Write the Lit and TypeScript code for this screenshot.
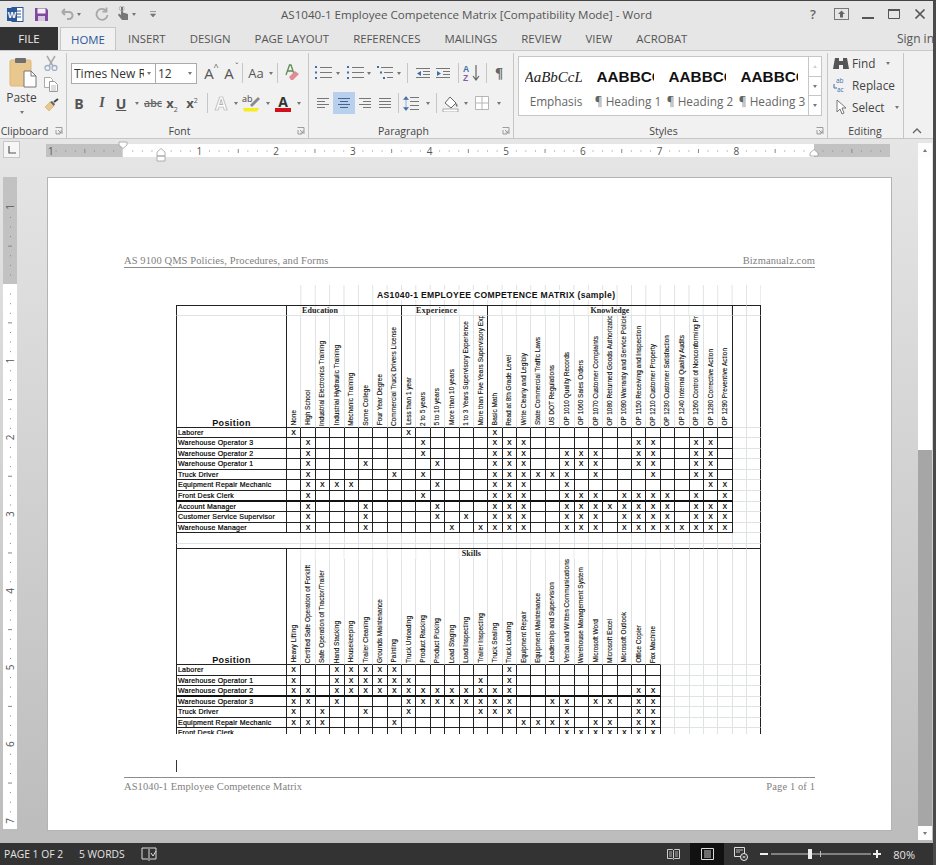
import { LitElement, html, css, svg } from 'lit'
import { customElement } from 'lit/decorators.js'

const EDU = ['None', 'High School', 'Industrial Electronics Training', 'Industrial Hydraulic Training', 'Mechanic Training', 'Some College', 'Four Year Degree', 'Commercial Truck Drivers License']
const EXP = ['Less than 1 year', '2 to 5 years', '5 to 10 years', 'More than 10 years', '1 to 3 Years Supervisory Experience', 'More than Five Years Supervisory Exp']
const KNOW = ['Basic Math', 'Read at 8th Grade Level', 'Write Clearly and Legibly', 'State Commercial Traffic Laws', 'US DOT Regulations', 'OP 1010 Quality Records', 'OP 1060 Sales Orders', 'OP 1070 Customer Complaints', 'OP 1080 Returned Goods Authorizatio', 'OP 1090 Warranty and Service Policie', 'OP 1150 Receiving and Inspection', 'OP 1210 Customer Property', 'OP 1230 Customer Satisfaction', 'OP 1240 Internal Quality Audits', 'OP 1260 Control of Nonconforming Pr', 'OP 1280 Corrective Action', 'OP 1290 Preventive Action']
const SKILLS = ['Heavy Lifting', 'Certified Safe Operation of Forklift', 'Safe Operation of Tractor/Trailer', 'Hand Stacking', 'Housekeeping', 'Trailer Cleaning', 'Grounds Maintenance', 'Painting', 'Truck Unloading', 'Product Racking', 'Product Picking', 'Load Staging', 'Load Inspecting', 'Trailer Inspecting', 'Truck Sealing', 'Truck Loading', 'Equipment Repair', 'Equipment Maintenance', 'Leadership and Supervision', 'Verbal and Written Communications', 'Warehouse Management System', 'Microsoft Word', 'Microsoft Excel', 'Microsoft Outlook', 'Office Copier', 'Fax Machine']

type Row = [string, number[], boolean?]

const ROWS1: Row[] = [
  ['Laborer', [0, 8, 14]],
  ['Warehouse Operator 3', [1, 9, 14, 15, 16, 24, 25, 28, 29]],
  ['Warehouse Operator 2', [1, 9, 14, 15, 16, 19, 20, 21, 24, 25, 28, 29]],
  ['Warehouse Operator 1', [1, 5, 10, 14, 15, 16, 19, 20, 21, 24, 25, 28, 29]],
  ['Truck Driver', [1, 7, 9, 14, 15, 16, 17, 18, 19, 21, 25, 28, 29]],
  ['Equipment Repair Mechanic', [1, 2, 3, 4, 10, 14, 15, 16, 19, 29, 30]],
  ['Front Desk Clerk', [1, 9, 14, 15, 16, 19, 20, 21, 23, 24, 25, 26, 28, 30], true],
  ['Account Manager', [1, 5, 10, 14, 15, 16, 19, 20, 21, 22, 23, 24, 25, 26, 28, 29, 30]],
  ['Customer Service Supervisor', [1, 5, 10, 12, 14, 15, 16, 19, 20, 21, 23, 24, 25, 26, 28, 29, 30]],
  ['Warehouse Manager', [1, 5, 11, 13, 14, 15, 16, 19, 20, 21, 23, 24, 25, 26, 27, 28, 29, 30]],
]

const ROWS2: Row[] = [
  ['Laborer', [0, 3, 4, 5, 6, 7, 15]],
  ['Warehouse Operator 1', [0, 3, 4, 5, 6, 7, 8, 13, 15]],
  ['Warehouse Operator 2', [0, 1, 3, 4, 5, 6, 7, 8, 9, 10, 11, 12, 13, 14, 15, 24, 25], true],
  ['Warehouse Operator 3', [0, 1, 3, 8, 9, 10, 11, 12, 13, 14, 15, 18, 19, 21, 22, 24, 25]],
  ['Truck Driver', [0, 2, 5, 8, 13, 14, 15, 19, 24, 25]],
  ['Equipment Repair Mechanic', [0, 1, 2, 7, 16, 17, 18, 19, 21, 22, 24, 25]],
  ['Front Desk Clerk', [19, 20, 21, 22, 23, 24, 25]],
]

const GRID_COLS = 33
const INCH = 76.7

const caret = html`<i class="caret"></i>`
const launcher = html`<svg class="launcher" width="8" height="8" viewBox="0 0 8 8"><path d="M.5 .5h6.5v6.5M1 3v4h4M3 3l3 3M6 3.5V6H3.5" fill="none" stroke="#888" stroke-width=".8"/></svg>`

function lines(rows: [number, number, number][], color = '#777') {
  return rows.map(([x, y, w]) => svg`<rect x=${x} y=${y} width=${w} height="1" fill=${color}></rect>`)
}

@customElement('app-root')
export class AppRoot extends LitElement {
  static styles = css`
    :host {
      display: block;
      width: 936px;
      height: 865px;
      overflow: hidden;
      font-family: 'Open Sans', 'Noto Sans', sans-serif;
      color: #444;
    }
    .frame {
      box-sizing: border-box;
      width: 936px;
      height: 865px;
      display: flex;
      flex-direction: column;
      border-right: 3px solid #4a4a4a;
      border-top: 1px solid #444;
      background: #e6e6e6;
    }

    /* title bar */
    .titlebar {
      height: 26px;
      flex: none;
      display: grid;
      grid-template-columns: 1fr auto 1fr;
      align-items: center;
      font-size: 11.6px;
      color: #555;
    }
    .qat, .winctl { display: flex; align-items: center; }
    .qat { padding-left: 7px; }
    .qat .save { margin-left: 10px; }
    .qat .undo { margin-left: 11px; }
    .qat .qcaret { margin-left: 3px; }
    .qat .redo { margin-left: 14px; }
    .qat .touch { margin-left: 8px; }
    .qat .custom { margin-left: 14px; }
    .winctl { justify-content: flex-end; gap: 12px; padding-right: 6px; }
    .winctl .help { font-size: 13px; font-weight: 600; color: #666; margin-right: 6px; }

    /* tabs */
    .tabs {
      height: 23px;
      flex: none;
      display: flex;
      align-items: stretch;
      font-size: 11.4px;
      color: #555;
    }
    .tab { display: flex; align-items: center; padding: 0 12px; white-space: nowrap; }
    .tab.file { width: 58px; box-sizing: border-box; justify-content: center; background: #333; color: #eee; padding: 0; margin-right: 2px; }
    .tab.home { width: 56px; box-sizing: border-box; justify-content: center; padding: 0; color: #2b579a; background: #f1f1f1; border: 1px solid #c6c6c6; border-bottom: none; }
    .signin { margin-left: auto; display: flex; align-items: center; font-size: 12px; width: 36px; overflow: hidden; white-space: nowrap; flex: none; }

    /* ribbon */
    .ribbon {
      height: 89px;
      flex: none;
      box-sizing: border-box;
      display: flex;
      background: #f1f1f1;
      border-top: 1px solid #c9c9c9;
      border-bottom: 1px solid #c6c6c6;
    }
    .group {
      box-sizing: border-box;
      display: flex;
      flex-direction: column;
      flex: none;
      margin: 2px 0 0;
      border-right: 1px solid #c6c6c6;
      position: relative;
    }
    .gbody { flex: 1; min-height: 0; }
    .glabel {
      height: 15px;
      font-size: 10.5px;
      line-height: 17px;
      text-align: center;
      color: #444;
      flex: none;
    }
    .launcher { position: absolute; right: 3px; bottom: 3px; }
    .g-clip { width: 67px; }
    .g-clip .glabel { padding-right: 17px; }
    .g-font { width: 242px; padding-left: 4px; }
    .g-font .glabel { padding-right: 20px; }
    .g-para { width: 205px; padding-left: 4px; }
    .g-para .glabel { padding-right: 19px; }
    .g-style { width: 314px; padding-left: 4px; }
    .g-style .glabel { padding-right: 18px; }
    .g-edit { width: 76px; padding-left: 5px; }
    .g-edit .glabel { padding-right: 6px; }
    .collapse { flex: 1; display: flex; align-items: flex-end; justify-content: center; padding-bottom: 4px; padding-right: 4px; }

    .clip { display: flex; height: 100%; }
    .paste { width: 43px; display: flex; flex-direction: column; align-items: center; padding-top: 4px; font-size: 12px; box-sizing: border-box; }
    .paste svg { display: block; margin-left: 3px; }
    .paste span { line-height: 16px; margin-top: 2px; }
    .paste .caret { margin-top: 5px; }
    .minis { width: 18px; margin-left: -1px; display: flex; flex-direction: column; align-items: center; gap: 6px; padding-top: 2px; }

    .row { display: flex; align-items: center; height: 22px; }
    .font-r1 { margin-top: 9px; }
    .font-r2 { margin-top: 8px; }
    .combo {
      box-sizing: border-box;
      height: 21px;
      background: #fff;
      border: 1px solid #ababab;
      display: flex;
      align-items: center;
      font-size: 12px;
      color: #333;
      padding-left: 2px;
      overflow: hidden;
      white-space: nowrap;
    }
    .combo span { flex: 1; overflow: hidden; }
    .combo .caret { margin: 0 4px 0 3px; }
    .c-font { width: 85px; }
    .c-size { width: 41px; border-left: none; }
    .ib { display: inline-flex; align-items: center; justify-content: center; height: 22px; flex: none; }
    .w8 { width: 8px; } .w10 { width: 10px; } .w16 { width: 16px; } .w18 { width: 18px; } .w20 { width: 20px; } .w22 { width: 22px; } .w30 { width: 30px; }
    .ml1 { margin-left: 1px; } .ml2 { margin-left: 2px; } .ml3 { margin-left: 3px; } .ml4 { margin-left: 4px; } .ml7 { margin-left: 7px; }
    .sep { width: 1px; height: 20px; background: #c6c6c6; flex: none; }
    .bigA { font-size: 15px; color: #555; position: relative; }
    .bigA small { font-size: 9px; position: absolute; top: -3px; right: -5px; }
    .aa { font-size: 13px; color: #555; }
    .fx { font-size: 14px; font-weight: 700; color: #555; }
    .fx.b { font-family: 'Open Sans', sans-serif; }
    .fx.i { font-family: 'Liberation Serif', serif; font-style: italic; }
    .fx.u { text-decoration: underline; }
    .abc { font-size: 10.5px; font-weight: 600; color: #666; text-decoration: line-through; }
    .xs { font-size: 13px; font-weight: 700; color: #555; line-height: 16px; }
    .xs sub, .xs sup { font-size: 7px; font-weight: 400; line-height: 0; }
    .outlineA { font-size: 17px; font-weight: 700; color: #fff; -webkit-text-stroke: .7px #aaa; }
    .colorA { display: flex; flex-direction: column; align-items: center; font-size: 14px; font-weight: 700; color: #333; line-height: 13px; }
    .colorA i { display: block; width: 16px; height: 4px; background: #d2101c; }
    .hl { background: #b8cfed; height: 22px; }
    .para-r1 { margin-top: 9px; }
    .para-r2 { margin-top: 8px; }
    .pil { font-size: 15px; color: #666; font-family: 'Liberation Serif', serif; font-weight: 700; }

    .gallery {
      box-sizing: border-box;
      width: 304px;
      height: 60px;
      margin-top: 3px;
      background: #fff;
      border: 1px solid #c6c6c6;
      display: flex;
    }
    .style-item { width: 72px; flex: none; display: flex; flex-direction: column; align-items: center; box-sizing: border-box; }
    .style-item:first-child { margin-left: 1px; }
    .sample { height: 26px; margin: 7px 0 0 -6px; width: 57px; overflow: hidden; white-space: nowrap; font: 700 15.300px/26px 'Liberation Sans', sans-serif; color: #111; }
    .sample.em { font: italic 400 15px/26px 'Liberation Serif', serif; color: #222; }
    .sname { font-size: 11.8px; color: #666; white-space: nowrap; line-height: 18px; margin-top: 2px; }
    .scroll { margin-left: auto; width: 14px; display: flex; flex-direction: column; border-left: 1px solid #c6c6c6; }
    .scroll div { flex: 1; display: flex; align-items: center; justify-content: center; border-bottom: 1px solid #c6c6c6; }
    .scroll div:last-child { border-bottom: none; }
    .scroll .dim { opacity: .35; }

    .edit { display: flex; flex-direction: column; gap: 0; font-size: 11.8px; color: #444; margin-top: -1px; }
    .edit div { display: flex; align-items: center; height: 22px; gap: 3px; white-space: nowrap; }
    .edit .caret { margin-left: 7px; }

    /* workspace */
    .workspace {
      flex: 1;
      min-height: 0;
      display: flex;
      background: linear-gradient(#e6e6e6, #bcbcbc);
    }
    .mainc { width: 918px; flex: none; display: flex; flex-direction: column; }
    .ruler-row { height: 21px; flex: none; position: relative; display: flex; align-items: flex-start; }
    .tabstop {
      box-sizing: border-box;
      width: 17px;
      height: 17px;
      margin: 2px 0 0 3px;
      background: #f6f6f6;
      border: 1px solid #c6c6c6;
      display: flex;
      align-items: center;
      justify-content: center;
    }
    .hruler { margin: 5px 0 0 26px; overflow: visible; display: block; }
    .ruler-text { font: 10px 'Open Sans', sans-serif; fill: #555; }
    .docbody { flex: 1; min-height: 0; display: flex; align-items: flex-start; padding-top: 17px; }
    .vruler { margin: 0 31px 0 3px; flex: none; display: block; }

    .page {
      box-sizing: border-box;
      width: 843px;
      height: 652px;
      margin-top: 1px;
      flex: none;
      background: #fff;
      box-shadow: 0 0 0 1px #b4b4b4;
      padding: 76px 76px 0;
      display: flex;
      flex-direction: column;
      font-family: 'Liberation Serif', serif;
      color: #7f7f7f;
      font-size: 10.5px;
    }
    .phead, .pfoot { display: flex; justify-content: space-between; flex: none; height: 13px; line-height: 13px; letter-spacing: .1px; }
    .phead { border-bottom: 1px solid #8c8c8c; }
    .pfoot { border-top: 1px solid #8c8c8c; box-sizing: content-box; padding-top: 2px; }
    .cursor { width: 1px; height: 12px; background: #333; margin: 26px 0 5px 52px; flex: none; }

    .sheet { margin: 17px 0 0 52px; width: 586px; height: 449px; overflow: hidden; flex: none; }
    .matrix {
      display: grid;
      grid-template-columns: 111px repeat(33, 14.39px);
      grid-template-rows: 20px 11px 111.500px repeat(10, 10.6px) 10.6px 3.900px 11px 106px repeat(7, 10.6px);
      font-family: 'Liberation Sans', sans-serif;
      color: #111;
    }
    .matrix > div { box-sizing: border-box; min-width: 0; min-height: 0; overflow: hidden; }
    .ruled {
      background:
        linear-gradient(#fff, #fff) 0 0 / 111px 100% no-repeat,
        linear-gradient(to right, #dfe3e3 1px, transparent 1px) 110px 0 / 14.39px 100%;
    }
    .sheet-title {
      grid-column: 1 / -1;
      font: 700 8.600px/20px 'Liberation Sans', sans-serif;
      letter-spacing: .32px;
      padding-left: 201px;
      white-space: nowrap;
    }
    .sheet-title span { background: #fff; }
    .b-r { border-right: 1px solid #dfe3e3; }
    .b-b { border-bottom: 1px solid #dfe3e3; }
    .d-r { border-right: 1px solid #222; }
    .d-b { border-bottom: 1px solid #222; }
    .d-bb { border-bottom: 2px solid #111; }
    .d-t { border-top: 1px solid #222; }
    .d-l { border-left: 1px solid #222; }
    .s6 { grid-column: span 6; }
    .s8 { grid-column: span 8; }
    .s17 { grid-column: span 17; }
    .s26 { grid-column: span 26; }
    .band {
      font: 700 8px/10px 'Liberation Serif', serif;
      letter-spacing: .1px;
      text-align: center;
      color: #222;
      white-space: nowrap;
      background: linear-gradient(to right, #e6e9e9 1px, transparent 1px) -1px 0 / 14.39px 100%;
    }
    .band.edu { padding-right: 48px; }
    .band.exp { padding-right: 16px; letter-spacing: .3px; }
    .band.skills { padding-right: 5px; line-height: 9px; }
    .pos {
      display: flex;
      align-items: flex-end;
      justify-content: center;
      font: 700 9px/8px 'Liberation Sans', sans-serif;
      letter-spacing: .4px;
    }
    .pos span { display: block; height: 8px; }
    .vh { display: flex; align-items: flex-end; justify-content: center; }
    .vh span {
      writing-mode: vertical-rl;
      transform: rotate(180deg);
      white-space: nowrap;
      font-size: 6.500px;
      line-height: 10px;
      padding-top: 1px;
      flex: none;
      -webkit-text-stroke: .12px #111;
    }
    .lab { font-size: 7px; line-height: 9.6px; letter-spacing: .22px; white-space: nowrap; padding-left: 1px; color: #000; -webkit-text-stroke: .2px #000; }
    .x { font-size: 7px; font-weight: 700; line-height: 9.6px; text-align: center; }

    /* scrollbar */
    .vscroll { width: 14px; margin: 4px 0 3px; display: flex; flex-direction: column; flex: none; }
    .sb-btn { height: 14px; background: #fdfdfd; display: flex; align-items: center; justify-content: center; flex: none; }
    .sb-track { height: 293px; background: #fff; flex: none; }
    .sb-thumb { flex: 1; background: #a6a6a6; }

    /* status bar */
    .status {
      height: 22px;
      flex: none;
      display: flex;
      align-items: center;
      background: #333;
      color: #e4e4e4;
      font-size: 10.3px;
      padding-left: 4px;
    }
    .status .words { margin-left: 16px; }
    .status .proof { margin-left: 16px; display: block; }
    .status .right { margin-left: auto; display: flex; align-items: center; height: 100%; margin-right: 18px; }
    .view { display: flex; align-items: center; justify-content: center; height: 100%; width: 33px; }
    .view.on { background: #111; width: 34px; }
    .zoombar { display: block; margin-left: 3px; }
    .pct { margin-left: 11px; font-size: 11px; }

    .caret { display: inline-block; width: 0; height: 0; border-left: 2.5px solid transparent; border-right: 2.5px solid transparent; border-top: 3px solid #777; flex: none; }
    .caret.up { border-top: none; border-bottom: 3px solid #777; }
    svg { flex: none; }
  `

  private renderMatrix() {
    const last = GRID_COLS - 1
    const blankCells = (from: number, cls: string) => {
      const out = []
      for (let i = from; i <= last; i++) out.push(html`<div class="${cls} ${i === last ? 'd-r' : 'b-r'}"></div>`)
      return out
    }
    const head = (labels: string[], ends: number[]) => labels.map((t, i) => html`
      <div class="vh d-b ${ends.includes(i) ? 'd-r' : 'b-r'}"><span>${t}</span></div>`)
    const dataRows = (rows: Row[], n: number) => rows.map(([name, xs, heavy]) => {
      const bot = heavy ? 'd-bb' : 'd-b'
      const cells = []
      for (let i = 0; i <= last; i++) {
        if (i < n) cells.push(html`<div class="x d-r ${bot}">${xs.includes(i) ? 'X' : ''}</div>`)
        else cells.push(html`<div class="b-b ${i === last ? 'd-r' : 'b-r'}"></div>`)
      }
      return html`<div class="lab d-l d-r ${bot}">${name}</div>${cells}`
    })

    return html`
      <div class="matrix">
        <div class="sheet-title ruled"><span>AS1040-1 EMPLOYEE COMPETENCE MATRIX (sample)</span></div>

        <div class="d-l d-r d-t b-b"></div>
        <div class="band edu s8 d-r d-t b-b">Education</div>
        <div class="band exp s6 d-r d-t b-b">Experience</div>
        <div class="band s17 d-r d-t b-b">Knowledge</div>
        <div class="d-t b-b b-r"></div>
        <div class="d-t b-b d-r"></div>

        <div class="pos d-l d-r d-b">Position</div>
        ${head([...EDU, ...EXP, ...KNOW], [7, 13, 30])}
        <div class="b-b b-r"></div>
        <div class="b-b d-r"></div>

        ${dataRows(ROWS1, 31)}

        <div class="d-l b-b"></div>${blankCells(0, 'b-b')}
        <div class="d-l"></div>${blankCells(0, '')}

        <div class="d-l d-r d-t"></div>
        <div class="band skills s26 d-t">Skills</div>
        ${blankCells(26, 'd-t')}

        <div class="pos d-l d-r d-b">Position</div>
        ${head(SKILLS, [])}
        ${blankCells(26, 'b-b')}

        ${dataRows(ROWS2, 26)}
      </div>`
  }

  private hRuler() {
    const W = 844
    const zero = INCH
    const marks = []
    for (let n = -1; n <= 10; n++) {
      const x0 = zero + n * INCH
      for (let k = 1; k < 8; k++) {
        const x = x0 + (k * INCH) / 8
        if (x > W - 4) continue
        if (k === 4) marks.push(svg`<rect x=${x} y="5" width="1" height="4" fill="#888"></rect>`)
        else marks.push(svg`<rect x=${x} y="6.5" width="1" height="1" fill="#888"></rect>`)
      }
      if (n >= 1 && n <= 8) marks.push(svg`<text class="ruler-text" x=${x0} y="10.5" text-anchor="middle">${n}</text>`)
    }
    return html`<svg class="hruler" width=${W} height="13" viewBox="0 0 ${W} 13">
      <rect width=${W} height="13" fill="#fff"></rect>
      <rect width=${INCH} height="13" fill="#c2c2c2"></rect>
      <rect x="768" width="76" height="13" fill="#c2c2c2"></rect>
      <text class="ruler-text" x="2" y="10.5">1</text>
      ${marks}
      <path d="M73 -2h8v3l-4 3.5l-4 -3.5z" fill="#fff" stroke="#a0a0a0" stroke-width=".8"></path>
      <path d="M111 8l4 -3.5l4 3.5v4h-8z M111 12h8v5h-8z" fill="#fff" stroke="#a0a0a0" stroke-width=".8"></path>
      <path d="M764 12v-3l4 -3.5l4 3.5v3z" fill="#fff" stroke="#a0a0a0" stroke-width=".8"></path>
    </svg>`
  }

  private vRuler() {
    const H = 652
    const zero = 107
    const marks = []
    for (let n = -2; n <= 7; n++) {
      const y0 = zero + n * INCH
      for (let k = 1; k < 8; k++) {
        const y = y0 + (k * INCH) / 8
        if (y < 27 || y > H - 5) continue
        if (k === 4) marks.push(svg`<rect x="5" y=${y} width="4" height="1" fill="#888"></rect>`)
        else marks.push(svg`<rect x="7" y=${y} width="1" height="1" fill="#888"></rect>`)
      }
      if (n >= 1 && n <= 7) marks.push(svg`<text class="ruler-text" transform="translate(11 ${y0}) rotate(-90)" text-anchor="middle">${n}</text>`)
    }
    return html`<svg class="vruler" width="14" height=${H} viewBox="0 0 14 ${H}">
      <rect width="14" height=${H} fill="#fff"></rect>
      <rect width="14" height="107" fill="#c2c2c2"></rect>
      <text class="ruler-text" transform="translate(11 30) rotate(-90)" text-anchor="middle">1</text>
      ${marks}
    </svg>`
  }

  render() {
    return html`
      <div class="frame">
        <div class="titlebar">
          <div class="qat">
            <svg width="17" height="17" viewBox="0 0 17 17"><rect x="5" y="1.5" width="11" height="14" fill="#fff" stroke="#2b579a"/><path d="M8 5h6M8 8h6M8 11h6" stroke="#2b579a"/><rect x="0" y="2" width="10" height="13" fill="#2b579a"/><text x="5" y="12" font-size="9" font-weight="700" fill="#fff" text-anchor="middle" font-family="Liberation Sans">W</text></svg>
            <svg class="save" width="15" height="15" viewBox="0 0 15 15"><path d="M1 1h11l2 2v11H1z" fill="#7d4a9d"/><rect x="3.5" y="1.5" width="8" height="5" fill="#f4eef7"/><rect x="4" y="9" width="7" height="5" fill="#d9c6e2"/></svg>
            <svg class="undo" width="14" height="13" viewBox="0 0 14 13"><path d="M2 4h7a3.5 3.5 0 0 1 0 7H7M2 4l3 -3M2 4l3 3" fill="none" stroke="#a8a8a8" stroke-width="2"/></svg>
            <i class="caret qcaret"></i>
            <svg class="redo" width="14" height="14" viewBox="0 0 14 14"><path d="M11 3.5A5.5 5.5 0 1 0 12.5 8M11.5 .5v4h-4" fill="none" stroke="#a8a8a8" stroke-width="1.8"/></svg>
            <svg class="touch" width="12" height="16" viewBox="0 0 12 16"><path d="M4 1v8L2 7.5 1 9l4 5h6V8L6 6.5V1z" fill="#777"/><circle cx="4.8" cy="2.5" r="2.5" fill="none" stroke="#aaa" stroke-width=".8"/></svg>
            <i class="caret qcaret"></i>
            <svg class="custom" width="6" height="7" viewBox="0 0 6 7"><path d="M0 .5h6M.5 3l2.5 3L5.500 3z" stroke="#777" fill="#777" stroke-width=".7"/></svg>
          </div>
          <div>AS1040-1 Employee Competence Matrix [Compatibility Mode] - Word</div>
          <div class="winctl">
            <span class="help">?</span>
            <svg width="15" height="12" viewBox="0 0 15 12"><rect x=".5" y=".5" width="14" height="11" fill="none" stroke="#777"/><path d="M7.500 2.500l3.500 3.500H9v3.500H6V6H4z" fill="#666"/></svg>
            <svg width="14" height="14" viewBox="0 0 14 14"><rect x="1" y="10" width="12" height="2" fill="#555"/></svg>
            <svg width="14" height="14" viewBox="0 0 14 14"><path d="M1.500 2.500h11v9h-11z" fill="none" stroke="#555"/><rect x="1" y="2" width="12" height="2" fill="#555"/></svg>
            <svg width="14" height="14" viewBox="0 0 14 14"><path d="M2.500 2.500l9 9M11.500 2.500l-9 9" stroke="#555" stroke-width="1.700"/></svg>
          </div>
        </div>

        <div class="tabs">
          <div class="tab file">FILE</div>
          <div class="tab home">HOME</div>
          <div class="tab">INSERT</div>
          <div class="tab">DESIGN</div>
          <div class="tab">PAGE LAYOUT</div>
          <div class="tab">REFERENCES</div>
          <div class="tab">MAILINGS</div>
          <div class="tab">REVIEW</div>
          <div class="tab">VIEW</div>
          <div class="tab">ACROBAT</div>
          <div class="signin">Sign in</div>
        </div>

        <div class="ribbon">
          <div class="group g-clip">
            <div class="gbody clip">
              <div class="paste">
                <svg width="28" height="31" viewBox="0 0 28 31">
                  <rect x="1" y="3" width="21" height="26" rx="1.500" fill="#e9c88f" stroke="#dcb779" />
                  <rect x="6" y="1" width="11" height="5" rx="1" fill="#6f6f6f" />
                  <path d="M15 14h7l5 5v11H15z" fill="#fff" stroke="#777" />
                  <path d="M22 14v5h5" fill="none" stroke="#777" />
                </svg>
                <span>Paste</span>
                ${caret}
              </div>
              <div class="minis">
                <svg width="14" height="16" viewBox="0 0 14 16"><path d="M3 1l6 10M11 1l-6 10" stroke="#a9a9a9" stroke-width="1.500"/><circle cx="3.500" cy="13" r="2.500" fill="none" stroke="#9fb0c8" stroke-width="1.300"/><circle cx="10.500" cy="13" r="2.500" fill="none" stroke="#9fb0c8" stroke-width="1.300"/></svg>
                <svg width="14" height="15" viewBox="0 0 14 15"><path d="M.5 .5h6l2 2v8h-8z" fill="#fff" stroke="#aaa"/><path d="M5.500 4.500h5l3 3v7h-8z" fill="#fff" stroke="#999"/><path d="M7 9h5M7 11h5M7 13h5" stroke="#bbb"/></svg>
                <svg width="15" height="14" viewBox="0 0 15 14"><path d="M1 9l5 -5 4 4-5 5z" fill="#e9c88f" stroke="#cfa764" stroke-width=".6"/><path d="M6 4l2 -1 3 3-1 2z" fill="#666"/><path d="M10 4l4 -3" stroke="#444" stroke-width="2"/></svg>
              </div>
            </div>
            <div class="glabel">Clipboard</div>${launcher}
          </div>

          <div class="group g-font">
            <div class="gbody">
              <div class="row font-r1">
                <div class="combo c-font"><span>Times New Ro</span>${caret}</div>
                <div class="combo c-size"><span>12</span>${caret}</div>
                <span class="ib w18 ml3"><span class="bigA">A<small>^</small></span></span>
                <span class="ib w18 ml2"><span class="bigA">A<small>ˇ</small></span></span>
                <i class="sep ml4"></i>
                <span class="ib w20 ml3 aa">Aa</span><span class="ib w8 ml1">${caret}</span>
                <i class="sep ml2"></i>
                <span class="ib w20 ml3">
                  <svg width="17" height="18" viewBox="0 0 17 18"><path d="M3 11L6.500 1h1.500l3 9M4.500 7h5" fill="none" stroke="#5f8b57" stroke-width="1.300"/><path d="M6 13l6 -6 4 3-6 6H8z" fill="#e38b93"/></svg>
                </span>
              </div>
              <div class="row font-r2">
                <span class="ib w16 fx b">B</span>
                <span class="ib w16 ml7 fx i">I</span>
                <span class="ib w16 ml3 fx u b">U</span>
                <span class="ib w10 ml3">${caret}</span>
                <span class="ib w20 ml1 abc">abc</span>
                <span class="ib w16 ml1 xs"><span>x<sub>2</sub></span></span>
                <span class="ib w16 ml4 xs"><span>x<sup>2</sup></span></span>
                <i class="sep ml7"></i>
                <span class="ib w18 ml4 outlineA">A</span>
                <span class="ib w8 ml2">${caret}</span>
                <span class="ib w22 ml1">
                  <svg width="20" height="18" viewBox="0 0 20 18"><text x="0" y="8" font-size="9" fill="#444" font-family="Open Sans">ab</text><path d="M8 11l8 -8 2 2-8 8z" fill="#8a8a8a"/><path d="M1 14h16l-2 3.500H2z" fill="#f4ee1e"/></svg>
                </span>
                <span class="ib w8 ml1">${caret}</span>
                <span class="ib w20 ml1 colorA">A<i></i></span>
                <span class="ib w8 ml2">${caret}</span>
              </div>
            </div>
            <div class="glabel">Font</div>${launcher}
          </div>

          <div class="group g-para">
            <div class="gbody">
              <div class="row para-r1">
                <span class="ib w20"><svg width="18" height="14" viewBox="0 0 18 14"><path d="M1 1h2M1 6.500h2M1 12h2" stroke="#3f6fa8" stroke-width="2"/>${lines([[6, 1, 12], [6, 6, 12], [6, 11, 12]])}</svg></span>
                <span class="ib w8 ml1">${caret}</span>
                <span class="ib w20 ml3"><svg width="18" height="14" viewBox="0 0 18 14"><path d="M1 1h2M1 6.500h2M1 12h2" stroke="#3f6fa8" stroke-width="2"/>${lines([[6, 1, 12], [6, 6, 12], [6, 11, 12]])}</svg></span>
                <span class="ib w8">${caret}</span>
                <span class="ib w20 ml2"><svg width="16" height="14" viewBox="0 0 16 14"><path d="M0 1h2M3 6.500h2M6 12h2" stroke="#3f6fa8" stroke-width="2"/>${lines([[4, 1, 12], [7, 6, 9], [10, 11, 6]])}</svg></span>
                <span class="ib w8">${caret}</span>
                <i class="sep ml4"></i>
                <span class="ib w16 ml7"><svg width="14" height="11" viewBox="0 0 14 11">${lines([[0, 0, 14], [7, 3, 7], [7, 6, 7], [0, 9, 14]])}<path d="M5 3L1 5.500 5 8z" fill="#3f6fa8"/></svg></span>
                <span class="ib w16 ml4"><svg width="14" height="11" viewBox="0 0 14 11">${lines([[0, 0, 14], [7, 3, 7], [7, 6, 7], [0, 9, 14]])}<path d="M1 3l4 2.500L1 8z" fill="#3f6fa8"/></svg></span>
                <i class="sep ml7"></i>
                <span class="ib w20 ml3"><svg width="18" height="18" viewBox="0 0 18 18"><text x="0" y="8" font-size="8.500" font-weight="700" fill="#3f6fa8" font-family="Liberation Sans">A</text><text x="0" y="17" font-size="8.500" font-weight="700" fill="#8a5aa5" font-family="Liberation Sans">Z</text><path d="M13 1v14M10 12l3 4 3-4" fill="none" stroke="#666" stroke-width="1.200"/></svg></span>
                <i class="sep ml4"></i>
                <span class="ib w20 ml2 pil">¶</span>
              </div>
              <div class="row para-r2">
                <span class="ib w20"><svg width="12" height="10" viewBox="0 0 12 10">${lines([[0, 0, 12], [0, 3, 8], [0, 6, 12], [0, 9, 8]])}</svg></span>
                <span class="ib w22 hl"><svg width="12" height="10" viewBox="0 0 12 10">${lines([[0, 0, 12], [2, 3, 8], [0, 6, 12], [2, 9, 8]], '#44658f')}</svg></span>
                <span class="ib w20"><svg width="12" height="10" viewBox="0 0 12 10">${lines([[0, 0, 12], [4, 3, 8], [0, 6, 12], [4, 9, 8]])}</svg></span>
                <span class="ib w20"><svg width="12" height="10" viewBox="0 0 12 10">${lines([[0, 0, 12], [0, 3, 12], [0, 6, 12], [0, 9, 12]])}</svg></span>
                <i class="sep ml3"></i>
                <span class="ib w20 ml2"><svg width="16" height="17" viewBox="0 0 16 17"><path d="M3 2v13M0.500 4.500L3 1.500l2.500 3zM0.500 12.500L3 15.500l2.500 -3z" fill="#3f6fa8" stroke="#3f6fa8" stroke-width=".5"/>${lines([[7, 2, 9], [7, 6, 9], [7, 10, 9], [7, 14, 9]])}</svg></span>
                <span class="ib w8 ml3">${caret}</span>
                <i class="sep ml4"></i>
                <span class="ib w22 ml3"><svg width="18" height="18" viewBox="0 0 18 18"><path d="M3 9l5 -6 6 6-5 5z" fill="#fff" stroke="#666"/><path d="M14 9c2 2 2 3 1 4-1-1-2-2-1-4z" fill="#777"/><rect x="1" y="15" width="15" height="3" fill="#fff" stroke="#999" stroke-width=".8"/></svg></span>
                <span class="ib w8">${caret}</span>
                <span class="ib w20 ml2"><svg width="14" height="14" viewBox="0 0 14 14"><path d="M.5 .5h13v13H.5zM7 .5v13M.5 7h13" fill="#fff" stroke="#b5b5b5"/></svg></span>
                <span class="ib w8 ml3">${caret}</span>
              </div>
            </div>
            <div class="glabel">Paragraph</div>${launcher}
          </div>

          <div class="group g-style">
            <div class="gbody">
              <div class="gallery">
                <div class="style-item"><div class="sample em">AaBbCcL</div><div class="sname">Emphasis</div></div>
                <div class="style-item"><div class="sample">AABBCC</div><div class="sname">¶ Heading 1</div></div>
                <div class="style-item"><div class="sample">AABBCC</div><div class="sname">¶ Heading 2</div></div>
                <div class="style-item"><div class="sample">AABBCC</div><div class="sname">¶ Heading 3</div></div>
                <div class="scroll">
                  <div><i class="caret up dim"></i></div>
                  <div><i class="caret"></i></div>
                  <div><i class="caret"></i></div>
                </div>
              </div>
            </div>
            <div class="glabel">Styles</div>${launcher}
          </div>

          <div class="group g-edit">
            <div class="gbody edit">
              <div>
                <svg width="16" height="14" viewBox="0 0 16 14"><path d="M2 2h4v3h4V2h4l2 11h-6V9H6v4H0z" fill="#555"/></svg>Find${caret}
              </div>
              <div>
                <svg width="16" height="16" viewBox="0 0 16 16"><text x="3" y="6" font-size="6.500" fill="#3f6fa8" font-family="Open Sans">ab</text><text x="4" y="15" font-size="6.500" fill="#3f6fa8" font-family="Open Sans">ac</text><path d="M1 7v4h3" fill="none" stroke="#3f6fa8"/></svg>Replace
              </div>
              <div>
                <svg width="16" height="16" viewBox="0 0 16 16"><path d="M4 1v12l3 -3 2 5 2 -1-2 -5h4z" fill="#fff" stroke="#777"/></svg>Select${caret}
              </div>
            </div>
            <div class="glabel">Editing</div>
          </div>

          <div class="collapse">
            <svg width="10" height="6" viewBox="0 0 10 6"><path d="M1 5l4 -4 4 4" fill="none" stroke="#666" stroke-width="1.300"/></svg>
          </div>
        </div>

        <div class="workspace">
          <div class="mainc">
            <div class="ruler-row">
              <div class="tabstop"><svg width="8" height="8" viewBox="0 0 8 8"><path d="M1 0v7h7" fill="none" stroke="#555" stroke-width="1.200"/></svg></div>
              ${this.hRuler()}
            </div>
            <div class="docbody">
              ${this.vRuler()}
              <div class="page">
                <div class="phead"><span>AS 9100 QMS Policies, Procedures, and Forms</span><span>Bizmanualz.com</span></div>
                <div class="sheet">${this.renderMatrix()}</div>
                <div class="cursor"></div>
                <div class="pfoot"><span>AS1040-1 Employee Competence Matrix</span><span>Page 1 of 1</span></div>
              </div>
            </div>
          </div>
          <div class="vscroll">
            <div class="sb-btn"><i class="caret up"></i></div>
            <div class="sb-track"></div>
            <div class="sb-thumb"></div>
            <div class="sb-btn"><i class="caret"></i></div>
          </div>
        </div>

        <div class="status">
          <span>PAGE 1 OF 2</span>
          <span class="words">5 WORDS</span>
          <svg class="proof" width="16" height="14" viewBox="0 0 16 14"><path d="M7 1H1v11h6M9 1h6v11H9M8 0v14" fill="none" stroke="#ddd"/><path d="M10 6l2 3 3 -5" fill="none" stroke="#ddd"/></svg>
          <div class="right">
            <div class="view"><svg width="13" height="12" viewBox="0 0 13 12"><path d="M.5 1.500h5l1 1 1-1h5v9h-5l-1 1-1-1h-5zM6.500 2.500v8" fill="none" stroke="#ccc"/><path d="M2 4h3M2 6h3M2 8h3M8 4h3M8 6h3M8 8h3" stroke="#aaa"/></svg></div>
            <div class="view on"><svg width="13" height="12" viewBox="0 0 13 12"><path d="M.5 .5h12v11H.5z" fill="none" stroke="#ddd"/><path d="M3 3h7M3 5h7M3 7h7M3 9h7" stroke="#ccc"/></svg></div>
            <div class="view"><svg width="14" height="14" viewBox="0 0 14 14"><path d="M.5 .5h10v9H.5z" fill="none" stroke="#ddd"/><path d="M2 3h7M2 5h4" stroke="#bbb"/><circle cx="10" cy="10" r="3.500" fill="#333" stroke="#eee"/><path d="M8.500 9l3 2M11.500 9l-3 2" stroke="#eee" stroke-width=".7"/></svg></div>
            <svg class="zoombar" width="122" height="16" viewBox="0 0 122 16">
              <rect x="0" y="7" width="8" height="2" fill="#eee"></rect>
              <rect x="11" y="7.500" width="100" height="1" fill="#cfcfcf"></rect>
              <rect x="48" y="3" width="4" height="10" fill="#eee"></rect>
              <rect x="60" y="5" width="1" height="6" fill="#bbb"></rect>
              <path d="M113 8h8M117 4v8" stroke="#eee" stroke-width="2"></path>
            </svg>
            <span class="pct">80%</span>
          </div>
        </div>
      </div>
    `
  }
}
